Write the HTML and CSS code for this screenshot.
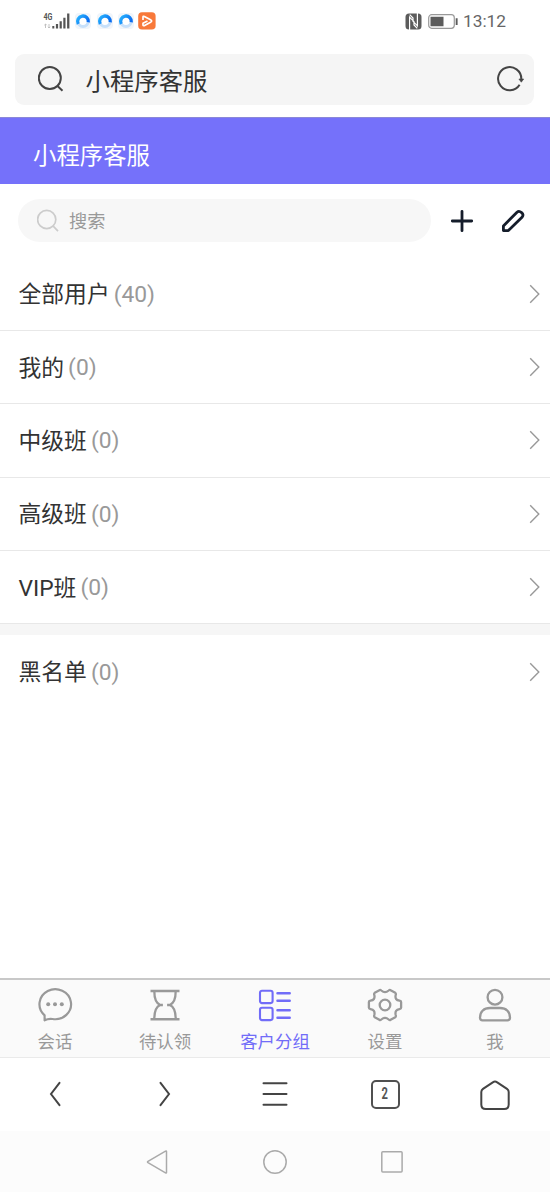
FILE: index.html
```html
<!DOCTYPE html>
<html lang="zh-CN">
<head>
<meta charset="utf-8">
<title>小程序客服</title>
<link rel="stylesheet" href="styles.css">
</head>
<body>
<svg class="defs" width="0" height="0">
  <defs>
    <linearGradient id="ring" x1="0" y1="0" x2="1" y2="0.6"><stop offset="0" stop-color="#27b4ff"/><stop offset="1" stop-color="#0a6cf0"/></linearGradient>
    <symbol id="browser" viewBox="0 0 18 18">
      <rect x="1" y="1" width="16" height="16" rx="4" fill="#f1f5fa"/>
      <circle cx="9" cy="9.300" r="5.200" fill="#fff" stroke="#c7e0fa" stroke-width="3"/>
      <path d="M4.200 11.900A5.400 5.400 0 1 1 14.300 10.300" fill="none" stroke="url(#ring)" stroke-width="3.300"/>
    </symbol>
    <symbol id="chevron" viewBox="0 0 12 20"><path d="M1.200 1.300 9.800 10 1.200 18.700" fill="none" stroke="#999" stroke-width="1.400"/></symbol>
  </defs>
</svg>
<div class="screen">
  <header class="status">
    <div class="status-left">
      <svg width="27" height="18" viewBox="0 0 27 18" fill="#555">
        <text class="net" x="0.500" y="8.200" textLength="9" lengthAdjust="spacingAndGlyphs">4G</text>
        <path d="M2.500 16v-4M1.300 13.200 2.500 12l1.200 1.200M6 12v4M4.800 14.800 6 16l1.200-1.200" fill="none" stroke="#bbb" stroke-width=".9"/>
        <path d="M9.300 14h2v2.500h-2zM12.900 12h2.200v4.500h-2.200zM16.600 9.300h2.200v7.200h-2.200zM20.300 5.800h2.200v10.700h-2.200zM24.100 1.500h2.300v15h-2.300z"/>
      </svg>
      <svg class="app" width="18" height="18"><use href="#browser"/></svg>
      <svg class="app" width="18" height="18"><use href="#browser"/></svg>
      <svg class="app" width="18" height="18"><use href="#browser"/></svg>
      <svg width="18" height="18" viewBox="0 0 18 18"><rect x=".2" y=".2" width="17.400" height="17.400" rx="3.800" fill="#f8793a"/><path d="M5 8V5.200Q5 3.800 6.400 4.500L13 8.100Q14.300 9 13 9.900L6.200 13.700Q5 14 5 12.800V11.300L9.500 9" fill="none" stroke="#fff" stroke-width="1.700" stroke-linejoin="round"/></svg>
    </div>
    <div class="status-right">
      <svg width="17" height="17" viewBox="0 0 17 17"><rect x=".5" y=".5" width="16" height="16" rx="3.500" fill="#5c5c5c"/><path d="M4.600 17V4.200L9 8.700V12L12.300 15.400M12.400 0v12.800L8 8.300V5L4.700 1.600" fill="none" stroke="#fff" stroke-width="1.200"/></svg>
      <svg width="30" height="15" viewBox="0 0 30 15"><rect x=".7" y=".7" width="25.600" height="13.600" rx="3" fill="none" stroke="#999" stroke-width="1.200"/><path d="M2.500 2.700h13v9.600h-13zM27.700 4.200h1.900v6.800h-1.900z" fill="#5c5c5c"/></svg>
      <span class="time">13:12</span>
    </div>
  </header>
  <div class="address">
    <svg width="26" height="26" viewBox="0 0 26 26" fill="none" stroke="#444" stroke-width="2"><circle cx="11.800" cy="12" r="11"/><path d="m19.500 20 5 4.700"/></svg>
    <span class="address-text">小程序客服</span>
    <svg width="28" height="26" viewBox="0 0 28 26" fill="none" stroke="#444" stroke-width="2"><path d="M22.600 18.800A11.600 11.600 0 1 1 24.300 13"/><path d="M21.900 13h4.800l-2.400 3.200z" fill="#444" stroke-width=".6"/></svg>
  </div>
  <div class="title">小程序客服</div>
  <div class="tools">
    <div class="search">
      <svg width="22" height="23" viewBox="0 0 22 23" fill="none" stroke="#ccc" stroke-width="1.700"><circle cx="9.700" cy="10.500" r="9.100"/><path d="m16.200 17.200 4.800 5"/></svg>
      <span>搜索</span>
    </div>
    <svg class="plus" width="24" height="24" viewBox="0 0 24 24"><path d="M12 2.300v19.400M2.300 12h19.400" stroke="#151d2b" stroke-width="2.800" stroke-linecap="round"/></svg>
    <svg class="pencil" width="24" height="24" viewBox="0 0 24 24"><path d="M2.400 21.600v-4.600L16 3.200Q18 1.400 20.600 3.600T21 8.300L7.400 21.600Z" fill="none" stroke="#151d2b" stroke-width="2.800" stroke-linejoin="round"/></svg>
  </div>
  <main class="list">
    <div class="row"><span>全部用户</span><span class="count">(40)</span><svg width="12" height="20"><use href="#chevron"/></svg></div>
    <div class="row"><span>我的</span><span class="count">(0)</span><svg width="12" height="20"><use href="#chevron"/></svg></div>
    <div class="row"><span>中级班</span><span class="count">(0)</span><svg width="12" height="20"><use href="#chevron"/></svg></div>
    <div class="row"><span>高级班</span><span class="count">(0)</span><svg width="12" height="20"><use href="#chevron"/></svg></div>
    <div class="row"><span>VIP班</span><span class="count">(0)</span><svg width="12" height="20"><use href="#chevron"/></svg></div>
    <div class="gap"></div>
    <div class="row last"><span>黑名单</span><span class="count">(0)</span><svg width="12" height="20"><use href="#chevron"/></svg></div>
  </main>
  <nav class="tabs">
    <div class="tab">
      <svg width="36" height="36" viewBox="0 0 36 36" fill="none" stroke="#999" stroke-width="2.200"><path d="M7.600 33.300V28.300A15.800 15 0 1 1 15.500 32Q11.300 31.400 7.600 33.300Z" stroke-linejoin="round"/><g fill="#999" stroke="none"><circle cx="11.200" cy="17.300" r="2"/><circle cx="18" cy="17.300" r="2"/><circle cx="24.800" cy="17.300" r="2"/></g></svg>
      <span>会话</span>
    </div>
    <div class="tab">
      <svg width="36" height="36" viewBox="0 0 36 36" fill="none" stroke="#999" stroke-width="2.300"><path d="M3.500 4h29M3.500 32.300h29" stroke-width="2.500"/><path d="M7.300 4C7.300 12 9.500 16.500 13.200 18H15.900M7.300 32C7.300 24 9.500 19.500 13.200 18M28.700 4C28.700 12 26.500 16.500 22.800 18H20.100M28.700 32C28.700 24 26.500 19.500 22.800 18"/></svg>
      <span>待认领</span>
    </div>
    <div class="tab active">
      <svg width="36" height="36" viewBox="0 0 36 36" fill="none" stroke="#716cf8" stroke-width="2.100"><rect x="3" y="3.700" width="12.600" height="12.400" rx="2"/><rect x="3" y="20.700" width="12.600" height="12.400" rx="2"/><path d="M20.500 6.300h12.200M20.500 13.800h12.200M20.500 23.200h12.200M20.500 30.800h12.200" stroke-width="2.500" stroke-linecap="round"/></svg>
      <span>客户分组</span>
    </div>
    <div class="tab">
      <svg width="36" height="36" viewBox="0 0 36 36" fill="none" stroke="#999" stroke-width="2.300" stroke-linejoin="round"><path d="M12.400 3.200Q13.200 2.500 14.300 3.500 18 6.700 21.700 3.500 22.800 2.500 23.600 3.200L28.300 5.800Q29.200 6.500 28.700 8C27.900 11.500 29.300 13.200 32.500 13.700Q34.100 14 34.100 15V20.800Q34.100 21.800 32.500 22.100C29.300 22.700 27.900 24.500 28.700 28Q29.200 29.500 28.300 30.200L23.600 32.800Q22.800 33.500 21.700 32.500 18 29.300 14.300 32.500 13.200 33.500 12.400 32.800L7.700 30.200Q6.800 29.500 7.300 28C8.100 24.500 6.700 22.700 3.500 22.100Q1.900 21.800 1.900 20.800V15Q1.900 14 3.500 13.700C6.700 13.200 8.100 11.500 7.300 8Q6.800 6.500 7.700 5.800Z"/><circle cx="18" cy="18" r="5.300"/></svg>
      <span>设置</span>
    </div>
    <div class="tab">
      <svg width="36" height="36" viewBox="0 0 36 36" fill="none" stroke="#999" stroke-width="2.300"><circle cx="18" cy="10.200" r="7.400"/><path d="M5.500 33.300Q3 33.300 3 30.800C3 24.500 7 21 13 21H23C29 21 33 24.500 33 30.800Q33 33.300 30.500 33.300Z"/></svg>
      <span>我</span>
    </div>
  </nav>
  <div class="browser-bar">
    <svg width="36" height="36" viewBox="0 0 36 36"><path d="M22.500 6.800 14 18l8.500 11.200"/></svg>
    <svg width="36" height="36" viewBox="0 0 36 36"><path d="M13.500 6.800 22 18l-8.500 11.200"/></svg>
    <svg width="36" height="36" viewBox="0 0 36 36"><path d="M6.500 7.300h23M6.500 18h23M6.500 28.700h23"/></svg>
    <div class="pages"><span>2</span></div>
    <svg width="36" height="36" viewBox="0 0 36 36"><path d="M15.800 6.300Q18 4.800 20.200 6.300L30 12.900Q31.700 14.100 31.700 16V28.500Q31.700 33 27.200 33H8.800Q4.300 33 4.300 28.500V16Q4.300 14.100 6 12.900Z"/></svg>
  </div>
  <footer class="system">
    <svg width="26" height="26" viewBox="0 0 26 26"><path d="M21.500 2.500V23.500Q21.500 24.300 20.500 23.800L3 13.700Q2 13 3 12.300L20.500 2.200Q21.500 1.700 21.500 2.500Z"/></svg>
    <svg width="26" height="26" viewBox="0 0 26 26"><circle cx="13" cy="13" r="11.200"/></svg>
    <svg width="26" height="26" viewBox="0 0 26 26"><rect x="2.800" y="2.700" width="20.300" height="20.300" rx="1"/></svg>
  </footer>
</div>
</body>
</html>
```
FILE: styles.css
```css
* { box-sizing: border-box; }
body {
  margin: 0;
  background: #fff;
  color: #333;
  font-family: Roboto, "Noto Sans CJK SC", sans-serif;
}
svg { display: block; flex: none; }
.defs { position: absolute; }
.screen { width: 550px; height: 1192px; display: flex; flex-direction: column; }

.status { height: 53.5px; padding: 11.5px 44px 0 43px; display: flex; justify-content: space-between; align-items: flex-start; flex: none; }
.status-left, .status-right { display: flex; align-items: center; }
.status-left { gap: 3.3px; }
.status-left svg:nth-child(2) { margin-left: 1.2px; }
.net { font: 700 9.5px Roboto, sans-serif; }
.status-right { height: 19px; gap: 6px; }
.time { font-size: 17.3px; color: #666; line-height: 19px; margin-left: -1px; padding-top: 1px; }

.address { flex: none; height: 51.5px; margin: 0 16px 12px 15px; padding: 0 9px 0 22.5px; border-radius: 9px; background: #f5f5f5; display: flex; align-items: center; }
.address-text { flex: 1; padding: 5px 0 0 22px; font-size: 24.4px; line-height: 36px; }
.title { flex: none; height: 67px; padding: 8px 33px 0; background: #7571fa; border-top: 1px solid #8b88d8; color: #fff; font-size: 23.4px; line-height: 60px; }

.tools { flex: none; height: 73.5px; padding: 14.5px 25px 0 18px; display: flex; align-items: flex-start; }
.search { width: 413px; height: 43.5px; border-radius: 22px; background: #f7f7f7; padding-left: 18.5px; display: flex; align-items: center; gap: 10.5px; color: #999; font-size: 18.2px; }
.plus { margin: 10px 0 0 19px; }
.pencil { margin: 10px 0 0 27px; }

.list { flex: 1; }
.row { height: 73.35px; padding: 0 9px 0 18.5px; border-bottom: 1px solid #e8e8e8; display: flex; align-items: center; font-size: 22.8px; line-height: 34px; }
.row span { padding-top: 3px; }
.row.last { border: 0; }
.row .count { color: #999; margin-left: 4px; padding-top: 2px; flex: 1; }
.gap { height: 11px; background: #f6f6f6; }

.tabs { flex: none; height: 80px; border-top: 2px solid #c8c8c8; border-bottom: 1px solid #eaeaea; background: #fafafa; display: flex; }
.tab { width: 110px; padding-top: 7px; display: flex; flex-direction: column; align-items: center; color: #999; font-size: 17.4px; line-height: 24px; }
.tab span { margin-top: 7px; }
.tab.active { color: #716cf8; }

.browser-bar { flex: none; height: 73px; display: grid; grid-template-columns: repeat(5, 110px); place-items: center; padding-bottom: 1px; }
.browser-bar path { fill: none; stroke: #444; stroke-width: 2; stroke-linecap: round; }
.pages { width: 29px; height: 29px; border: 2px solid #505050; border-radius: 5px; display: flex; align-items: center; justify-content: center; color: #555; font-size: 16px; font-weight: 700; line-height: 24px; }
.pages span { transform: scaleX(.7); }

.system { flex: none; height: 61px; background: #fcfcfc; padding: 0 145px; display: flex; align-items: center; justify-content: space-between; }
.system path, .system circle, .system rect { fill: none; stroke: #aaa; stroke-width: 1.5; }
```
